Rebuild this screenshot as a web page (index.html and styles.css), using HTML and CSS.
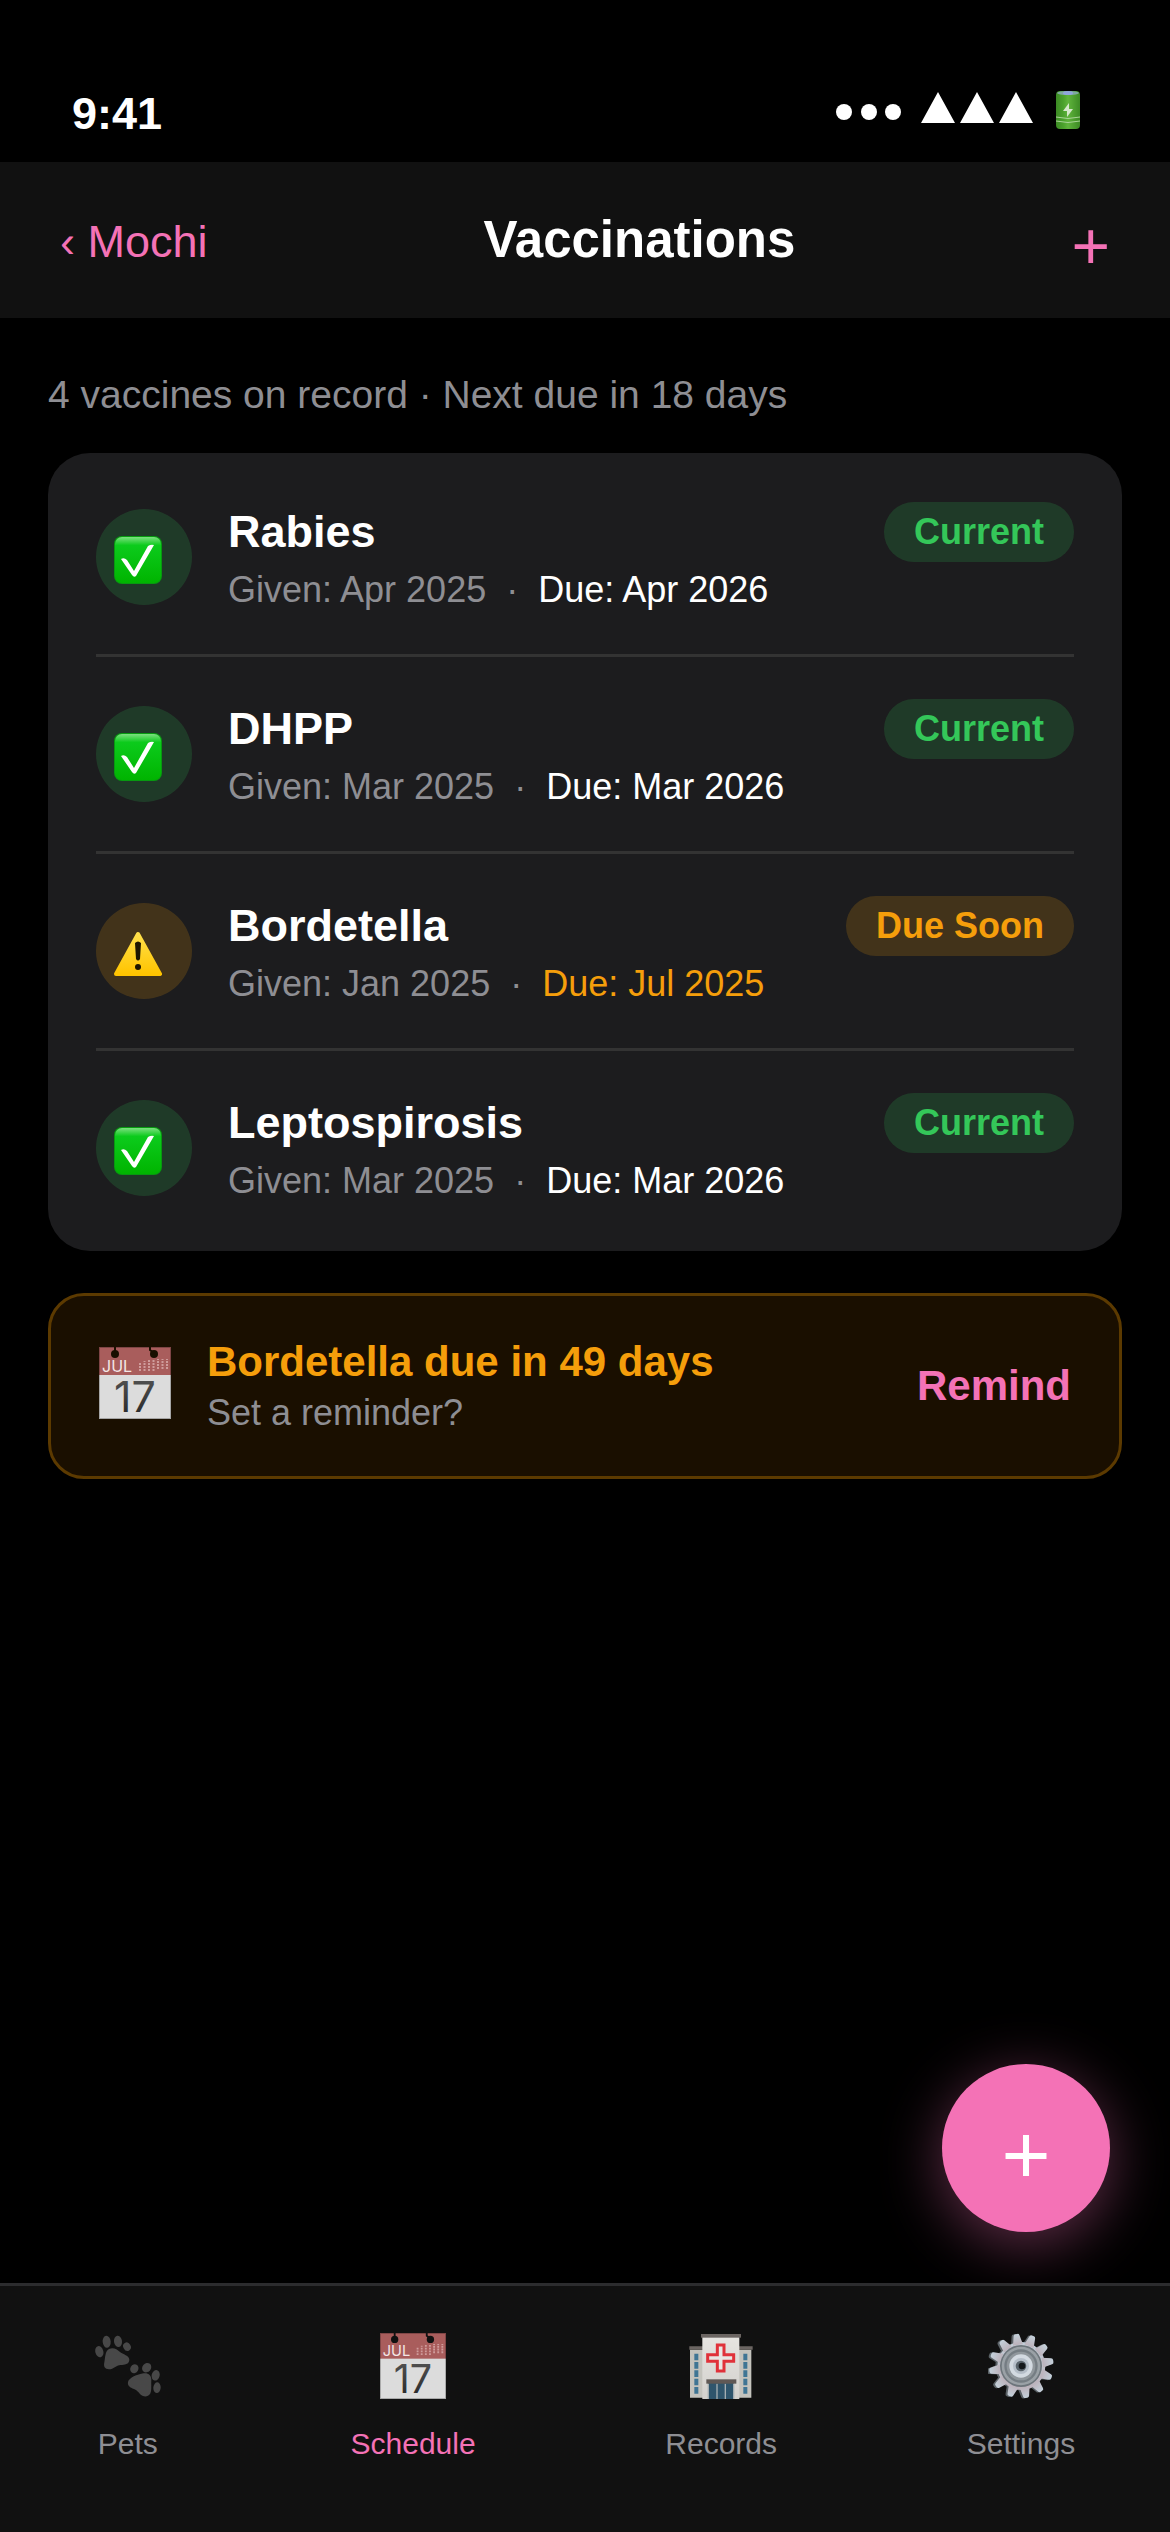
FILE: index.html
```
<!DOCTYPE html>
<html lang="en">
<head>
    <meta charset="UTF-8">
    <meta name="viewport" content="width=device-width, initial-scale=1.0">
    <title>Vaccinations</title>
    <link rel="stylesheet" href="styles.css">
</head>
<body>

    <!-- shared icons -->
    <svg class="defs" width="0" height="0" aria-hidden="true">
        <defs>
            <linearGradient id="green" x1="0" y1="0" x2="0" y2="1">
                <stop offset="0" stop-color="#7be07f"/>
                <stop offset="0.18" stop-color="#0ccb1c"/>
                <stop offset="1" stop-color="#00b400"/>
            </linearGradient>
            <linearGradient id="yellow" x1="0" y1="0" x2="0" y2="1">
                <stop offset="0" stop-color="#ffe04a"/>
                <stop offset="1" stop-color="#ffc400"/>
            </linearGradient>
            <linearGradient id="ink" x1="0" y1="0" x2="0" y2="1">
                <stop offset="0" stop-color="#5a5a5a"/>
                <stop offset="1" stop-color="#222222"/>
            </linearGradient>
            <linearGradient id="cell" x1="0" y1="0" x2="1" y2="0">
                <stop offset="0" stop-color="#3c8a24"/>
                <stop offset="0.3" stop-color="#4aa12c"/>
                <stop offset="0.5" stop-color="#5fb43c"/>
                <stop offset="1" stop-color="#3c8a24"/>
            </linearGradient>
            <linearGradient id="steel" x1="0" y1="0" x2="0" y2="1">
                <stop offset="0" stop-color="#c3d0da"/>
                <stop offset="1" stop-color="#bcb2bb"/>
            </linearGradient>
            <linearGradient id="wall" x1="0" y1="0" x2="0" y2="1">
                <stop offset="0" stop-color="#e6e4e1"/>
                <stop offset="1" stop-color="#d3d1cd"/>
            </linearGradient>
            <mask id="holes">
                <rect width="72" height="72" fill="#fff"/>
                <path d="M16 0v6M51 0v3l4 3" stroke="#000" stroke-width="2" fill="none"/>
                <circle cx="16" cy="7" r="4"/>
                <circle cx="55" cy="7" r="4"/>
            </mask>
            <path id="tooth" d="M-15 -64L-9 -92Q-8 -97 -3 -97H3Q8 -97 9 -92L15 -64Z"/>
            <g id="cog">
                <circle r="72"/>
                <use href="#tooth" transform="rotate(-9)"/>
                <use href="#tooth" transform="rotate(21)"/>
                <use href="#tooth" transform="rotate(51)"/>
                <use href="#tooth" transform="rotate(81)"/>
                <use href="#tooth" transform="rotate(111)"/>
                <use href="#tooth" transform="rotate(141)"/>
                <use href="#tooth" transform="rotate(171)"/>
                <use href="#tooth" transform="rotate(201)"/>
                <use href="#tooth" transform="rotate(231)"/>
                <use href="#tooth" transform="rotate(261)"/>
                <use href="#tooth" transform="rotate(291)"/>
                <use href="#tooth" transform="rotate(321)"/>
            </g>
        </defs>
        <symbol id="check" viewBox="0 0 48 48">
            <rect width="48" height="48" rx="8" fill="#079a10"/>
            <rect x="1" y="1" width="46" height="46" rx="7" fill="url(#green)"/>
            <path d="M7 23Q10 21 13 24L20 35L34 10Q37 8 40 9L22 40Q20 42 18 39Z" fill="#fff"/>
        </symbol>
        <symbol id="warning" viewBox="0 0 48 48">
            <path d="M24 4L46 44H2Z" fill="url(#yellow)" stroke="url(#yellow)" stroke-width="4" stroke-linejoin="round"/>
            <path d="M21 13Q24 10 27 13L26 29Q24 32 22 29Z" fill="#1d1600"/>
            <circle cx="24" cy="37" r="3" fill="#1d1600"/>
        </symbol>
        <symbol id="calendar" viewBox="0 0 72 72">
            <g mask="url(#holes)">
                <rect width="72" height="72" fill="#dcdcdc"/>
                <rect width="72" height="28" fill="#a95d5c"/>
                <path d="M41 24V16M45.500 24V14M50 24V12M54.500 24V12M59 22V12M63.500 22V12M68 22V12" stroke="#cf9c9b" stroke-width="2" stroke-dasharray="2 1"/>
                <rect x="0.500" y="0.500" width="71" height="71" fill="none" stroke="#000" stroke-opacity="0.25"/>
            </g>
        </symbol>
    </svg>

    <div class="status-bar">
        <span class="time">9:41</span>
        <svg class="status-icons" viewBox="0 0 262 48" aria-hidden="true">
            <g fill="#fff">
                <circle cx="8" cy="22" r="8"/>
                <circle cx="33" cy="22" r="8"/>
                <circle cx="57" cy="22" r="8"/>
                <path d="M102 2L119 33H85ZM141 2L158 33H124ZM180 2L197 33H163Z"/>
            </g>
            <rect x="220" y="1" width="24" height="38" rx="4" fill="url(#cell)"/>
            <ellipse cx="232" cy="3" rx="11" ry="2" fill="#7fa9a0"/>
            <ellipse cx="232" cy="3" rx="5" ry="2" fill="#8fa6dc"/>
            <path d="M233 13L227 21L231 21L231 27L237 19L233 19Z" fill="#d5e8cb"/>
            <path d="M220 27Q232 30 244 27M220 31Q232 34 244 31" fill="none" stroke="#a9d497" stroke-width="1"/>
        </svg>
    </div>

    <header class="nav-bar">
        <a class="back" href="#">‹ Mochi</a>
        <h1>Vaccinations</h1>
        <button class="add" type="button" aria-label="Add vaccine">+</button>
    </header>

    <main>
        <p class="summary">4 vaccines on record · Next due in 18 days</p>

        <ul class="card">
            <li class="vaccine">
                <span class="icon current"><svg><use href="#check"/></svg></span>
                <div class="info">
                    <h2>Rabies</h2>
                    <p>Given: Apr 2025 &nbsp;·&nbsp; <span class="due">Due: Apr 2026</span></p>
                </div>
                <span class="badge current">Current</span>
            </li>
            <li class="vaccine">
                <span class="icon current"><svg><use href="#check"/></svg></span>
                <div class="info">
                    <h2>DHPP</h2>
                    <p>Given: Mar 2025 &nbsp;·&nbsp; <span class="due">Due: Mar 2026</span></p>
                </div>
                <span class="badge current">Current</span>
            </li>
            <li class="vaccine">
                <span class="icon soon"><svg><use href="#warning"/></svg></span>
                <div class="info">
                    <h2>Bordetella</h2>
                    <p>Given: Jan 2025 &nbsp;·&nbsp; <span class="due late">Due: Jul 2025</span></p>
                </div>
                <span class="badge soon">Due Soon</span>
            </li>
            <li class="vaccine">
                <span class="icon current"><svg><use href="#check"/></svg></span>
                <div class="info">
                    <h2>Leptospirosis</h2>
                    <p>Given: Mar 2025 &nbsp;·&nbsp; <span class="due">Due: Mar 2026</span></p>
                </div>
                <span class="badge current">Current</span>
            </li>
        </ul>

        <section class="reminder">
            <svg class="reminder-icon" viewBox="0 0 72 78" aria-hidden="true">
                <use href="#calendar" width="72" height="72"/>
                <text class="cal-month" x="3" y="25">JUL</text>
                <text class="cal-day" x="36" y="65" text-anchor="middle" fill="url(#ink)">17</text>
            </svg>
            <div class="reminder-text">
                <h2>Bordetella due in 49 days</h2>
                <p>Set a reminder?</p>
            </div>
            <button class="remind" type="button">Remind</button>
        </section>
    </main>

    <button class="fab" type="button" aria-label="Add record">+</button>

    <nav class="tab-bar">
        <a class="tab" href="#">
            <svg viewBox="0 0 198 198" aria-hidden="true">
                <g fill="#484848">
                    <ellipse cx="13" cy="56" rx="12" ry="17" transform="rotate(-15 13 56)"/>
                    <ellipse cx="35" cy="26" rx="12" ry="18" transform="rotate(-5 35 26)"/>
                    <ellipse cx="69" cy="25" rx="12" ry="17" transform="rotate(-8 69 25)"/>
                    <ellipse cx="96" cy="41" rx="11" ry="13" transform="rotate(-30 96 41)"/>
                    <path d="M42 48C54 42 66 48 74 56C84 64 103 67 103 80C103 94 88 95 77 96C63 97 56 109 42 109C29 109 25 100 28 88C31 74 30 54 42 48Z"/>
                    <ellipse cx="118" cy="107" rx="12" ry="14" transform="rotate(30 118 107)"/>
                    <ellipse cx="155" cy="104" rx="13" ry="15" transform="rotate(40 155 104)"/>
                    <ellipse cx="182" cy="127" rx="12" ry="16" transform="rotate(15 182 127)"/>
                    <ellipse cx="186" cy="164" rx="11" ry="16" transform="rotate(5 186 164)"/>
                    <path d="M146 121C160 119 169 127 169 140C168 153 170 162 168 175C166 190 153 193 142 188C132 183 130 173 117 168C105 164 97 158 99 147C102 134 127 124 146 121Z"/>
                </g>
            </svg>
            <span>Pets</span>
        </a>
        <a class="tab active" href="#">
            <svg viewBox="0 0 72 72" aria-hidden="true">
                <use href="#calendar" width="72" height="72"/>
                <text class="cal-month" x="3" y="25">JUL</text>
                <text class="cal-day" x="36" y="65" text-anchor="middle" fill="url(#ink)">17</text>
            </svg>
            <span>Schedule</span>
        </a>
        <a class="tab" href="#">
            <svg viewBox="0 0 198 198" aria-hidden="true">
                <path d="M6 50H45V194H6ZM153 50H190V194H153Z" fill="#c4c3bd"/>
                <path d="M4 40H45V50H4ZM153 40H194V50H153Z" fill="#6b6562"/>
                <rect x="43" y="10" width="111" height="188" fill="url(#wall)"/>
                <rect x="39" y="3" width="120" height="11" fill="#6b6562"/>
                <path d="M19 62H31V82H19ZM19 87H31V107H19ZM19 112H31V132H19ZM19 137H31V157H19ZM19 162H31V182H19ZM166 62H178V82H166ZM166 87H178V107H166ZM166 112H178V132H166ZM166 137H178V157H166ZM166 162H178V182H166Z" fill="#3f7594"/>
                <path d="M88 36H108V65H137V85H108V114H88V85H59V65H88Z" fill="#e8e6e4" stroke="#e0313a" stroke-width="9"/>
                <rect x="61" y="150" width="76" height="48" fill="#2f556c"/>
                <path d="M61 152V198M87 152V198M112 152V198M137 152V198" stroke="#a5aeb2" stroke-width="4"/>
                <rect x="55" y="139" width="90" height="13" fill="#5f5855"/>
            </svg>
            <span>Records</span>
        </a>
        <a class="tab" href="#">
            <svg viewBox="-99 -99 198 198" aria-hidden="true">
                <use href="#cog" x="-5" y="1" fill="#5b6267"/>
                <use href="#cog" x="1" fill="url(#steel)"/>
                <circle r="63" fill="#6d757b"/>
                <circle r="58" fill="#9aa1a6"/>
                <circle r="50" fill="#757d83"/>
                <circle r="43" fill="#90979c"/>
                <circle r="35" fill="#d3dae1"/>
                <circle r="24" fill="#b5bec8"/>
                <circle r="16" fill="#59636b"/>
                <circle cx="3" r="10" fill="#14181b"/>
            </svg>
            <span>Settings</span>
        </a>
    </nav>

</body>
</html>
```
FILE: styles.css
```
* {
    box-sizing: border-box;
    margin: 0;
    padding: 0;
}
body {
    font-family: "Liberation Sans", Arial, sans-serif;
    background-color: #000;
    color: #fff;
    display: flex;
    flex-direction: column;
    min-height: 100vh;
}
a {
    color: inherit;
    text-decoration: none;
}
button {
    font-family: inherit;
    border: none;
    background: none;
    cursor: pointer;
}
.defs {
    position: absolute;
}

/* top bars */
.status-bar {
    display: flex;
    justify-content: space-between;
    align-items: center;
    padding: 88px 72px 22px;
}
.time {
    font-size: 45px;
    line-height: 52px;
    font-weight: bold;
}
.status-icons {
    width: 262px;
    height: 48px;
}
.nav-bar {
    display: flex;
    justify-content: space-between;
    align-items: baseline;
    padding: 42px 60px;
    background-color: #111;
}
.nav-bar h1 {
    font-size: 51px;
    line-height: 72px;
}
.back {
    color: #f472b6;
    font-size: 45px;
}
.add {
    align-self: center;
    color: #f472b6;
    font-size: 66px;
    line-height: 60px;
    padding-top: 12px;
}

/* vaccine list */
main {
    flex: 1;
    padding: 54px 48px;
}
.summary {
    color: #8e8e93;
    font-size: 39px;
    line-height: 45px;
    margin-bottom: 36px;
}
.card {
    list-style: none;
    background-color: #1c1c1e;
    border-radius: 42px;
    padding: 7px 48px 6px;
    margin-bottom: 42px;
}
.vaccine {
    display: flex;
    align-items: center;
    gap: 36px;
    padding: 42px 0;
    border-bottom: 3px solid #333;
}
.vaccine:last-child {
    border-bottom: none;
}
.icon {
    display: flex;
    justify-content: center;
    align-items: center;
    width: 96px;
    height: 96px;
    padding: 6px 12px 0 0;
    border-radius: 50%;
}
.icon svg {
    width: 48px;
    height: 48px;
}
.info {
    flex: 1;
}
.info h2 {
    font-size: 45px;
    line-height: 60px;
    margin-bottom: 6px;
}
.info p {
    color: #8e8e93;
    font-size: 36px;
    line-height: 44px;
}
.info .due {
    color: #fff;
}
.info .late {
    color: #f59e0b;
}
.badge {
    align-self: flex-start;
    font-size: 36px;
    line-height: 42px;
    font-weight: bold;
    padding: 9px 30px;
    border-radius: 30px;
}
.current {
    color: #34c759;
    background-color: rgba(52, 199, 89, 0.18);
}
.soon {
    color: #f59e0b;
    background-color: rgba(245, 158, 11, 0.18);
}

/* reminder */
.reminder {
    display: flex;
    align-items: center;
    gap: 36px;
    padding: 42px 48px;
    background-color: #1a0f00;
    border: 3px solid #5c3a00;
    border-radius: 36px;
}
.reminder-icon {
    width: 72px;
    height: 78px;
}
.reminder-text {
    flex: 1;
}
.reminder-text h2 {
    color: #f59e0b;
    font-size: 42px;
    line-height: 48px;
    margin-bottom: 6px;
}
.reminder-text p {
    color: #8e8e93;
    font-size: 36px;
    line-height: 42px;
}
.remind {
    color: #f472b6;
    font-size: 42px;
    font-weight: bold;
}
.cal-month {
    font-family: Inter, sans-serif;
    font-size: 16px;
    fill: #f3e6e6;
}
.cal-day {
    font-family: Inter, sans-serif;
    font-size: 43px;
}

/* floating button */
.fab {
    position: fixed;
    right: 60px;
    bottom: 300px;
    width: 168px;
    height: 168px;
    padding-top: 12px;
    border-radius: 50%;
    background-color: #f472b6;
    color: #fff;
    font-size: 84px;
    line-height: 96px;
    box-shadow: 0 12px 60px rgba(244, 114, 182, 0.4);
}

/* bottom tabs */
.tab-bar {
    position: relative;
    display: flex;
    justify-content: space-around;
    padding: 47px 0 70px;
    background-color: #111;
    border-top: 3px solid #2c2c2e;
}
.tab {
    display: flex;
    flex-direction: column;
    align-items: center;
    gap: 27px;
    color: #8e8e93;
    font-size: 30px;
    line-height: 36px;
}
.tab svg {
    width: 66px;
    height: 66px;
}
.tab.active {
    color: #f472b6;
}
```
